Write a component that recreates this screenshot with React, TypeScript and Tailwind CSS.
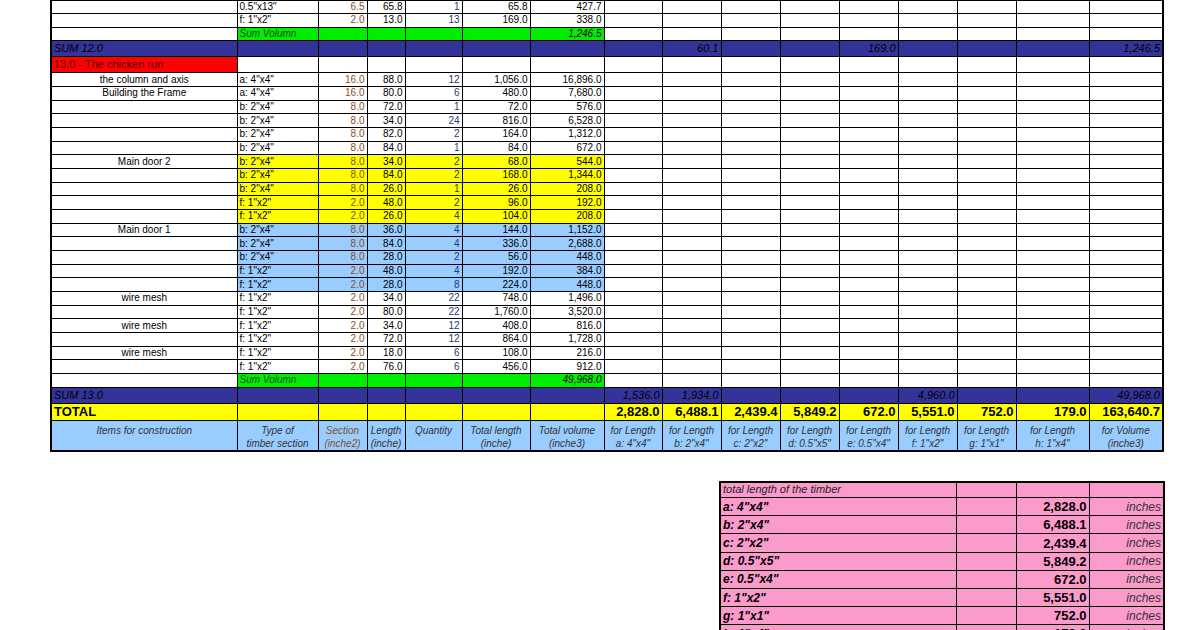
import React from "react";

type R = { a?: string; b: string; c: string; d: string; e: string; f: string; g: string; bg?: string };
const w = [186, 81, 49, 38, 57, 68, 74, 58, 59, 59, 59, 59, 59, 59, 73, 74];

const top: R[] = [
  { b: '0.5"x13"', c: "6.5", d: "65.8", e: "1", f: "65.8", g: "427.7" },
  { b: 'f: 1"x2"', c: "2.0", d: "13.0", e: "13", f: "169.0", g: "338.0" },
];
const Y = "bg-[#ffff00]";
const B = "bg-[#99ccff]";
const rows: R[] = [
  { a: "the column and axis", b: 'a: 4"x4"', c: "16.0", d: "88.0", e: "12", f: "1,056.0", g: "16,896.0" },
  { a: "Building the Frame", b: 'a: 4"x4"', c: "16.0", d: "80.0", e: "6", f: "480.0", g: "7,680.0" },
  { b: 'b: 2"x4"', c: "8.0", d: "72.0", e: "1", f: "72.0", g: "576.0" },
  { b: 'b: 2"x4"', c: "8.0", d: "34.0", e: "24", f: "816.0", g: "6,528.0" },
  { b: 'b: 2"x4"', c: "8.0", d: "82.0", e: "2", f: "164.0", g: "1,312.0" },
  { b: 'b: 2"x4"', c: "8.0", d: "84.0", e: "1", f: "84.0", g: "672.0" },
  { a: "Main door 2", b: 'b: 2"x4"', c: "8.0", d: "34.0", e: "2", f: "68.0", g: "544.0", bg: Y },
  { b: 'b: 2"x4"', c: "8.0", d: "84.0", e: "2", f: "168.0", g: "1,344.0", bg: Y },
  { b: 'b: 2"x4"', c: "8.0", d: "26.0", e: "1", f: "26.0", g: "208.0", bg: Y },
  { b: 'f: 1"x2"', c: "2.0", d: "48.0", e: "2", f: "96.0", g: "192.0", bg: Y },
  { b: 'f: 1"x2"', c: "2.0", d: "26.0", e: "4", f: "104.0", g: "208.0", bg: Y },
  { a: "Main door 1", b: 'b: 2"x4"', c: "8.0", d: "36.0", e: "4", f: "144.0", g: "1,152.0", bg: B },
  { b: 'b: 2"x4"', c: "8.0", d: "84.0", e: "4", f: "336.0", g: "2,688.0", bg: B },
  { b: 'b: 2"x4"', c: "8.0", d: "28.0", e: "2", f: "56.0", g: "448.0", bg: B },
  { b: 'f: 1"x2"', c: "2.0", d: "48.0", e: "4", f: "192.0", g: "384.0", bg: B },
  { b: 'f: 1"x2"', c: "2.0", d: "28.0", e: "8", f: "224.0", g: "448.0", bg: B },
  { a: "wire mesh", b: 'f: 1"x2"', c: "2.0", d: "34.0", e: "22", f: "748.0", g: "1,496.0" },
  { b: 'f: 1"x2"', c: "2.0", d: "80.0", e: "22", f: "1,760.0", g: "3,520.0" },
  { a: "wire mesh", b: 'f: 1"x2"', c: "2.0", d: "34.0", e: "12", f: "408.0", g: "816.0" },
  { b: 'f: 1"x2"', c: "2.0", d: "72.0", e: "12", f: "864.0", g: "1,728.0" },
  { a: "wire mesh", b: 'f: 1"x2"', c: "2.0", d: "18.0", e: "6", f: "108.0", g: "216.0" },
  { b: 'f: 1"x2"', c: "2.0", d: "76.0", e: "6", f: "456.0", g: "912.0" },
];

const td = "border border-black px-[2px] overflow-hidden whitespace-nowrap";
const empty9 = () => Array.from({ length: 9 }, (_, i) => <td key={i} className={td} />);

function DataRow({ r }: { r: R }) {
  const bg = r.bg ?? "";
  return (
    <tr className="h-[13.67px]">
      <td className={`${td} text-center`}>{r.a ?? ""}</td>
      <td className={`${td} ${bg}`}>{r.b}</td>
      <td className={`${td} ${bg} text-right text-[#8a4f1c]`}>{r.c}</td>
      <td className={`${td} ${bg} text-right`}>{r.d}</td>
      <td className={`${td} ${bg} text-right text-[#1f3a6e]`}>{r.e}</td>
      <td className={`${td} ${bg} text-right`}>{r.f}</td>
      <td className={`${td} ${bg} text-right`}>{r.g}</td>
      {empty9()}
    </tr>
  );
}

function SumVol({ v }: { v: string }) {
  const g = "bg-[#00ee00]";
  return (
    <tr className="h-[13.67px]">
      <td className={td} />
      <td className={`${td} ${g} italic text-[#1a4a1a]`}>Sum Volumn</td>
      <td className={`${td} ${g}`} /><td className={`${td} ${g}`} /><td className={`${td} ${g}`} /><td className={`${td} ${g}`} />
      <td className={`${td} ${g} text-right italic`}>{v}</td>
      {empty9()}
    </tr>
  );
}

function SumRow({ label, vals }: { label: string; vals: Record<number, string> }) {
  const cells = [];
  for (let i = 1; i < 16; i++)
    cells.push(<td key={i} className={`${td} text-right italic text-black`}>{vals[i] ?? ""}</td>);
  return (
    <tr className="h-[16px] bg-[#333399] text-[11px]">
      <td className={`${td} italic text-black`}>{label}</td>
      {cells}
    </tr>
  );
}

const totals = ["2,828.0", "6,488.1", "2,439.4", "5,849.2", "672.0", "5,551.0", "752.0", "179.0", "163,640.7"];
const heads: [string, string][] = [
  ["Items for construction", ""], ["Type of", "timber section"], ["Section", "(inche2)"], ["Length", "(inche)"],
  ["Quantity", ""], ["Total length", "(inche)"], ["Total volume", "(inche3)"],
  ["for Length", 'a: 4"x4"'], ["for Length", 'b: 2"x4"'], ["for Length", 'c: 2"x2"'], ["for Length", 'd: 0.5"x5"'],
  ["for Length", 'e:  0.5"x4"'], ["for Length", 'f: 1"x2"'], ["for Length", 'g: 1"x1"'], ["for Length", 'h: 1"x4"'],
  ["for Volume", "(inche3)"],
];

const pink: [string, string][] = [
  ['a: 4"x4"', "2,828.0"], ['b: 2"x4"', "6,488.1"], ['c: 2"x2"', "2,439.4"], ['d: 0.5"x5"', "5,849.2"],
  ['e:  0.5"x4"', "672.0"], ['f: 1"x2"', "5,551.0"], ['g: 1"x1"', "752.0"], ['h: 1"x4"', "179.0"],
];

export default function App() {
  return (
    <div className="w-[1200px] h-[630px] overflow-hidden bg-white text-[10px] leading-none text-black" style={{ fontFamily: '"Liberation Sans", Arial, sans-serif' }}>
      <table className="mt-[-1px] ml-[50px] table-fixed border-collapse border-2 border-black" style={{ width: 1112 }}>
        <colgroup>{w.map((x, i) => <col key={i} style={{ width: x }} />)}</colgroup>
        <tbody>
          {top.map((r, i) => <DataRow key={i} r={r} />)}
          <SumVol v="1,246.5" />
          <SumRow label="SUM 12.0" vals={{ 8: "60.1", 11: "169.0", 15: "1,246.5" }} />
          <tr className="h-[16px] text-[11px]">
            <td className={`${td} bg-[#ff0000] text-[#5a0000]`}>13.0 - The chicken run</td>
            {Array.from({ length: 15 }, (_, i) => <td key={i} className={td} />)}
          </tr>
          {rows.map((r, i) => <DataRow key={i} r={r} />)}
          <SumVol v="49,968.0" />
          <SumRow label="SUM 13.0" vals={{ 7: "1,536.0", 8: "1,934.0", 12: "4,960.0", 15: "49,968.0" }} />
          <tr className="h-[17px] bg-[#ffff00] text-[13px] font-bold">
            <td className={td}>TOTAL</td>
            {Array.from({ length: 6 }, (_, i) => <td key={i} className={td} />)}
            {totals.map((t, i) => <td key={i} className={`${td} text-right`}>{t}</td>)}
          </tr>
          <tr className="h-[29px] bg-[#99ccff] italic text-[#333] align-top">
            {heads.map(([a, b], i) => (
              <td key={i} className={`${td} text-center pt-[3px] leading-[13px] ${i === 2 ? "text-[#8a4f1c]" : ""}`}>
                {a}<br />{b}
              </td>
            ))}
          </tr>
        </tbody>
      </table>

      <table className="mt-[29px] ml-[719px] table-fixed border-collapse border-2 border-black bg-[#fb9bcc]" style={{ width: 444 }}>
        <colgroup><col style={{ width: 236 }} /><col style={{ width: 60 }} /><col style={{ width: 73 }} /><col style={{ width: 75 }} /></colgroup>
        <tbody className="text-[12px]">
          <tr className="h-[16px]">
            <td className={`${td} italic text-[11px] text-[#222]`}>total length of the timber</td>
            <td className={td} /><td className={td} /><td className={td} />
          </tr>
          {pink.map(([a, b], i) => (
            <tr key={i} className="h-[18.2px]">
              <td className={`${td} italic font-bold`}>{a}</td>
              <td className={td} />
              <td className={`${td} text-right font-bold text-[13px]`}>{b}</td>
              <td className={`${td} text-right italic text-[#333]`}>inches</td>
            </tr>
          ))}
        </tbody>
      </table>
    </div>
  );
}
